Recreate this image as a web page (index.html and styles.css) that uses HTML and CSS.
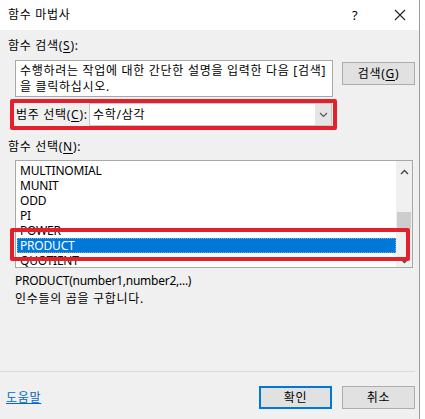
FILE: index.html
```html
<!DOCTYPE html>
<html lang="ko">
<head>
<meta charset="utf-8">
<title>함수 마법사</title>
<link rel="stylesheet" href="styles.css">
</head>
<body>
<div class="dialog">
  <header class="titlebar">
    <span class="title ko">함수 마법사</span>
    <span class="help">?</span>
    <svg class="close" width="12" height="12" viewBox="0 0 12 12"><path d="M1 1 L11 11 M11 1 L1 11" stroke="#222" stroke-width="1.1" fill="none"/></svg>
  </header>

  <main class="content">
    <div class="label ko first">함수 검색(<u>S</u>):</div>
    <div class="search-row">
      <div class="search-box ko">수행하려는 작업에 대한 간단한 설명을 입력한 다음 [검색]<br>을 클릭하십시오.</div>
      <button class="btn ko search-btn">검색(<u>G</u>)</button>
    </div>

    <div class="mark category">
      <span class="cat-label ko">범주 선택(<u>C</u>):</span>
      <div class="combo">
        <span class="combo-value ko">수학/삼각</span>
        <span class="combo-btn"><svg width="9" height="6" viewBox="0 0 9 6"><path d="M1 1 L4.5 4.5 L8 1" stroke="#555" stroke-width="1.1" fill="none"/></svg></span>
      </div>
    </div>

    <div class="label ko func-label">함수 선택(<u>N</u>):</div>
    <div class="list-wrap">
      <div class="list">
        <ul class="items">
          <li>MULTINOMIAL</li>
          <li>MUNIT</li>
          <li>ODD</li>
          <li>PI</li>
          <li>POWER</li>
          <li class="selected">PRODUCT</li>
          <li>QUOTIENT</li>
        </ul>
        <div class="scrollbar">
          <svg class="arrow up" width="9" height="6" viewBox="0 0 9 6"><path d="M1 5 L4.5 1.5 L8 5" stroke="#444" stroke-width="1.4" fill="none"/></svg>
          <div class="thumb"></div>
          <svg class="arrow down" width="9" height="6" viewBox="0 0 9 6"><path d="M1 1 L4.5 4.5 L8 1" stroke="#444" stroke-width="1.4" fill="none"/></svg>
        </div>
      </div>
      <div class="mark product-mark"></div>
    </div>

    <div class="desc">
      <div class="syntax">PRODUCT(number1,number2,...)</div>
      <div class="summary ko">인수들의 곱을 구합니다.</div>
    </div>

    <div class="separator"></div>

    <footer class="footer">
      <a class="help-link ko" href="#">도움말</a>
      <div class="buttons">
        <button class="btn ko ok">확인</button>
        <button class="btn ko">취소</button>
      </div>
    </footer>
  </main>
</div>
</body>
</html>
```

FILE: styles.css
```css
html, body {
  margin: 0;
  padding: 0;
  background: #ffffff;
}

body {
  width: 425px;
  height: 419px;
  overflow: hidden;
  font-family: "Noto Sans", "Noto Sans CJK KR", sans-serif;
  font-size: 12px;
  color: #000;
}

/* Hangul runs set a little looser */
.ko {
  letter-spacing: 0.7px;
}

.dialog {
  width: 419px;
  height: 419px;
  border-right: 1px solid #9a9a9a;
  display: flex;
  flex-direction: column;
}

/* title bar */
.titlebar {
  height: 30px;
  flex: none;
  background: #fff;
  display: flex;
  align-items: center;
  padding-left: 8px;
}

.title {
  flex: 1;
  line-height: 16px;
}

.help {
  width: 14px;
  margin-right: 28px;
  font-size: 13px;
  line-height: 16px;
}

.close {
  margin-right: 13px;
}

/* body */
.content {
  flex: 1;
  background: #f0f0f0;
  display: flex;
  flex-direction: column;
}

u {
  text-decoration: underline;
  text-underline-offset: 2px;
}

.label {
  line-height: 15px;
  padding-left: 8px;
}

.label.first {
  margin-top: 8px;
}

.search-row {
  display: flex;
  align-items: flex-start;
  margin-top: 7px;
  padding-left: 15px;
}

.search-box {
  width: 312px;
  height: 33px;
  padding: 2px 0 0 4px;
  background: #fff;
  border: 1px solid #a8a8a8;
  line-height: 16px;
  white-space: nowrap;
  overflow: hidden;
}

.btn {
  font-family: inherit;
  font-size: 12px;
  color: #000;
  background: #e1e1e1;
  border: 1px solid #adadad;
  padding: 0;
  height: 23px;
  width: 73px;
  line-height: 19px;
}

.search-btn {
  margin-left: 9px;
  margin-top: 2px;
}

/* red annotation frame */
.mark {
  border: 4px solid #e3202c;
  border-radius: 2px;
}

.category {
  width: 319px;
  height: 23px;
  margin: 2px 0 0 10px;
  display: flex;
  align-items: center;
}

.cat-label {
  padding-left: 2px;
  width: 73px;
  line-height: 16px;
  white-space: nowrap;
}

.combo {
  flex: 1;
  margin-right: 1px;
  height: 23px;
  background: #fff;
  border: 1px solid #c8c8c8;
  box-sizing: border-box;
  display: flex;
  align-items: center;
}

.combo-value {
  flex: 1;
  padding-left: 3px;
  line-height: 16px;
}

.combo-btn {
  width: 16px;
  height: 21px;
  background: #e5e5e5;
  display: flex;
  align-items: center;
  justify-content: center;
}

.func-label {
  margin-top: 9px;
}

/* function list */
.list-wrap {
  position: relative;
  margin-top: 6px;
  margin-left: 15px;
  width: 398px;
  height: 108px;
}

.list {
  width: 396px;
  height: 106px;
  border: 1px solid #a8a8a8;
  background: #fff;
  display: flex;
  overflow: hidden;
}

.items {
  list-style: none;
  margin: 0;
  padding: 2px 0 0 1px;
  flex: 1;
  letter-spacing: -0.2px;
}

.items li {
  height: 15px;
  line-height: 15px;
  padding-left: 3px;
}

.items li.selected {
  background: #0078d7;
  color: #fff;
  outline: 1px dotted #7aa8d8;
  outline-offset: -1px;
}

.scrollbar {
  width: 16px;
  background: #f0f0f0;
  position: relative;
}

.arrow {
  position: absolute;
  left: 4px;
}

.arrow.up {
  top: 8px;
}

.arrow.down {
  bottom: 3px;
}

.thumb {
  position: absolute;
  left: 1px;
  right: 1px;
  top: 51px;
  height: 17px;
  background: #cdcdcd;
}

.product-mark {
  position: absolute;
  left: -5px;
  top: 68px;
  width: 392px;
  height: 25px;
}

/* description */
.desc {
  margin-top: 4px;
  padding-left: 15px;
  line-height: 18px;
}

.syntax {
  letter-spacing: -0.25px;
}

.separator {
  margin-top: 63px;
  height: 1px;
  width: 415px;
  background: #dadada;
}

.footer {
  display: flex;
  align-items: center;
  justify-content: space-between;
  margin-top: 14px;
  padding-left: 6px;
  width: 409px;
}

.help-link {
  color: #0066cc;
  text-decoration: underline;
  line-height: 16px;
}

.buttons {
  display: flex;
  gap: 10px;
}

.btn.ok {
  border: 2px solid #0078d7;
  line-height: 17px;
}
```
